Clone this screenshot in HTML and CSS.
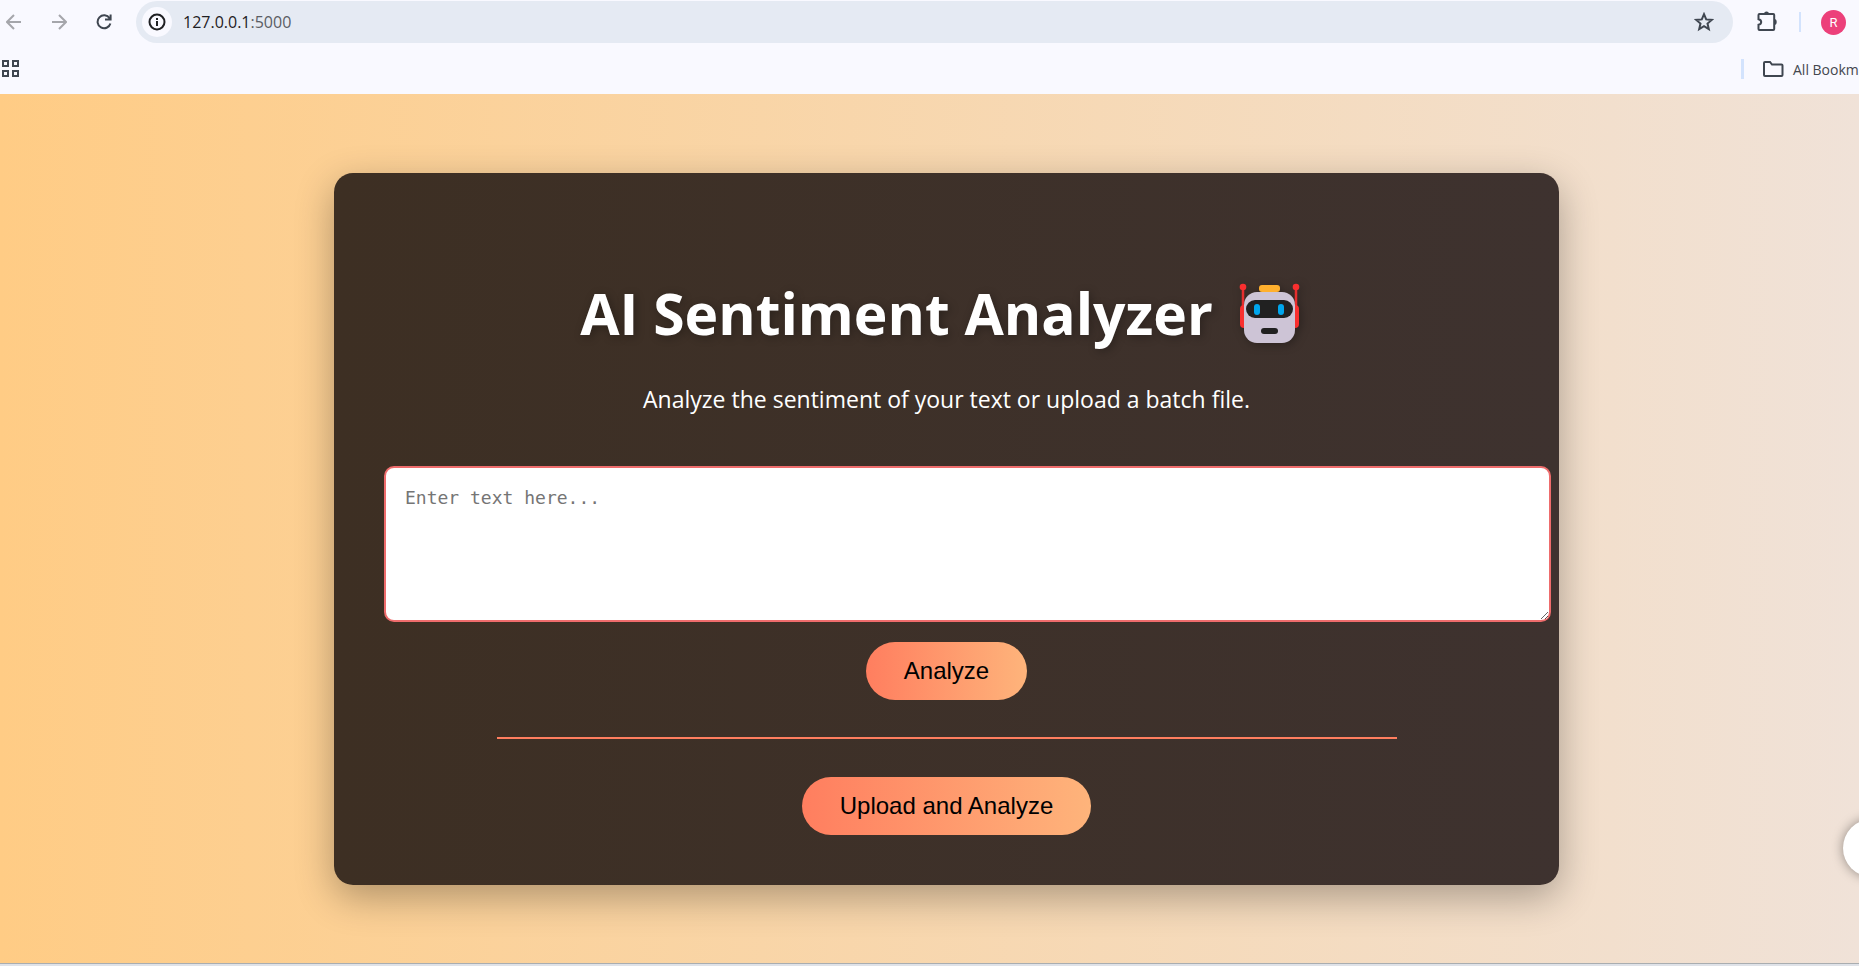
FILE: index.html
```html
<!DOCTYPE html>
<html lang="en">
<head>
<meta charset="utf-8">
<title>AI Sentiment Analyzer</title>
<link rel="stylesheet" href="styles.css">
</head>
<body>
<header class="browser">
  <div class="toolbar">
    <nav class="nav" aria-label="Navigation">
      <button class="icon-btn muted" aria-label="Back"><svg width="16" height="16" viewBox="0 0 16 16"><path d="M15 8H1.500M8 1L1 8l7 7"/></svg></button>
      <button class="icon-btn muted" aria-label="Forward"><svg width="16" height="16" viewBox="0 0 16 16"><path d="M1 8h13.500M8 1l7 7-7 7"/></svg></button>
      <button class="icon-btn" aria-label="Reload"><svg width="16" height="16" viewBox="0 0 16 16"><path d="M13.600 4.300A6.500 6.500 0 1 0 14.400 9.500M14.600 .500V5.500H9"/></svg></button>
    </nav>
    <div class="omnibox">
      <button class="site-info" aria-label="Site information"><svg width="18" height="18" viewBox="0 0 18 18"><circle cx="9" cy="9" r="7.500"/><path d="M9 8v5M9 5v2"/></svg></button>
      <a class="url" href="#">127.0.0.1<span class="port">:5000</span></a>
      <button class="icon-btn star" aria-label="Bookmark"><svg width="20" height="20" viewBox="0 0 20 20"><path d="M10 2.200l2.200 5.200 5.600.500-4.300 3.700 1.300 5.500-4.800-2.900-4.800 2.900 1.300-5.500L2.200 7.900l5.600-.500z"/></svg></button>
    </div>
    <button class="icon-btn" aria-label="Extensions"><svg width="22" height="22" viewBox="0 0 22 22"><path d="M3.500 3h13.700a1 1 0 0 1 1 1v14a1 1 0 0 1-1 1H3.500a1 1 0 0 1-1-1v-4.200c3.600-.8 3.600-4.800 0-5.600V4a1 1 0 0 1 1-1z"/><path class="solid" d="M8 3a2.500 2.500 0 0 1 5 0zM18.200 8a2.500 3 0 0 1 0 6z"/></svg></button>
    <span class="divider"></span>
    <button class="avatar" aria-label="Profile">R</button>
  </div>
  <div class="bookmarks">
    <button class="icon-btn apps" aria-label="Apps"><svg width="20" height="20" viewBox="0 0 20 20"><path d="M3 2h5v5H3zM13 2h5v5h-5zM3 12h5v5H3zM13 12h5v5h-5z"/></svg></button>
    <span class="divider wide"></span>
    <a class="folder" href="#"><svg width="22" height="18" viewBox="0 0 22 18"><path d="M2 3a1 1 0 0 1 1-1h5l2 2.500h9.500a1 1 0 0 1 1 1V15a1 1 0 0 1-1 1H3a1 1 0 0 1-1-1z"/></svg><span>All Bookmarks</span></a>
  </div>
</header>
<main class="page">
  <section class="card">
    <h1 class="title">AI Sentiment Analyzer
      <svg class="robot" width="62" height="62" viewBox="0 0 62 62" role="img" aria-label="robot">
        <path d="M4 5v24M57 5v24" stroke="#e52e2e" stroke-width="2.500"/>
        <circle cx="4" cy="5" r="3.300" fill="#f92f2f"/><circle cx="57" cy="5" r="3.300" fill="#f92f2f"/>
        <rect x="1" y="23" width="8" height="23" rx="4" fill="#f92f2f"/><rect x="52" y="23" width="8" height="23" rx="4" fill="#f92f2f"/>
        <rect x="20" y="3" width="21" height="7" rx="3" fill="#ffb02e"/>
        <rect x="5" y="10" width="51" height="51" rx="13" fill="#cdc4d6"/>
        <rect x="7" y="18" width="47" height="18" rx="9" fill="#212121"/>
        <rect x="15" y="22" width="6" height="11" rx="3" fill="#00a6ed"/><rect x="39" y="22" width="6" height="11" rx="3" fill="#00a6ed"/>
        <rect x="22" y="46" width="17" height="6" rx="3" fill="#212121"/>
      </svg>
    </h1>
    <p class="lead">Analyze the sentiment of your text or upload a batch file.</p>
    <form class="form">
      <textarea class="text-input" aria-label="Text to analyze" placeholder="Enter text here..."></textarea>
      <button class="action" type="button">Analyze</button>
    </form>
    <hr class="rule">
    <button class="action" type="button">Upload and Analyze</button>
  </section>
</main>
<footer class="edge"></footer>
<button class="assistant" aria-label="Assistant"><svg width="28" height="28" viewBox="0 0 28 28"><path d="M0 7h20" stroke="#3cc49a" stroke-width="3"/></svg></button>
</body>
</html>
```
FILE: styles.css
```css
body {
  margin: 0;
  min-height: 100vh;
  display: flex;
  flex-direction: column;
  overflow: hidden;
  font-family: "Open Sans", "Noto Sans", sans-serif;
}

button {
  border: 0;
  padding: 0;
  background: none;
}

.browser {
  background: #f9f9ff;
  color: #44474e;
}

.toolbar {
  display: flex;
  align-items: center;
  height: 44px;
  padding: 0 13px 0 4px;
}

.nav {
  display: flex;
  gap: 25px;
  margin-right: 22px;
}

.icon-btn {
  display: flex;
  padding: 0 2px;
}

.icon-btn svg,
.folder svg,
.site-info svg {
  fill: none;
  stroke: #3f4650;
  stroke-width: 2;
}

.icon-btn.muted svg {
  stroke: #a5a6ab;
}

.icon-btn .solid {
  fill: #3f4650;
  stroke: none;
}

.omnibox {
  display: flex;
  align-items: center;
  flex: 1;
  box-sizing: border-box;
  height: 42px;
  margin-right: 21px;
  padding: 0 17px 0 6px;
  border-radius: 21px;
  background: #e5eaf3;
}

.site-info {
  display: flex;
  align-items: center;
  justify-content: center;
  width: 30px;
  height: 30px;
  margin-right: 11px;
  border-radius: 50%;
  background: #f9f9ff;
}

.site-info svg {
  stroke: #1f2023;
}

.url {
  flex: 1;
  color: #1f2023;
  font-size: 16px;
  text-decoration: none;
}

.port {
  color: #5a5d64;
}

.divider {
  width: 2px;
  height: 20px;
  margin: 0 20px 0 19px;
  background: #d3e3fd;
}

.divider.wide {
  width: 3px;
  margin: 0 18px 0 auto;
}

.avatar {
  width: 25px;
  height: 25px;
  border-radius: 50%;
  background: #ec407a;
  color: #fff;
  font: 13px Roboto, sans-serif;
}

.bookmarks {
  display: flex;
  align-items: center;
  height: 50px;
}

.apps {
  padding: 0;
}

.folder {
  display: flex;
  align-items: center;
  gap: 9px;
  width: 97px;
  color: #44474e;
  font-size: 14px;
  text-decoration: none;
  white-space: nowrap;
}

.folder svg {
  flex: none;
}

.page {
  flex: 1;
  display: flex;
  align-items: center;
  justify-content: center;
  padding-left: 34px;
  background: linear-gradient(90deg, #ffcc85, #f0e2d8);
}

.card {
  display: flex;
  flex-direction: column;
  align-items: center;
  box-sizing: border-box;
  width: 90%;
  max-width: 1225px;
  padding: 100px 50px 50px;
  border-radius: 19px;
  background: linear-gradient(90deg, #3d2f23, #3e322f);
  box-shadow: 0 12px 38px rgba(0, 0, 0, 0.3);
}

.title {
  display: flex;
  align-items: center;
  gap: 26px;
  margin: 0;
  padding-right: 12px;
  color: #fff;
  font-size: 57px;
  line-height: 80px;
  text-shadow: 2px 2px 10px rgba(0, 0, 0, 0.3);
}

.robot {
  filter: drop-shadow(2px 2px 5px rgba(0, 0, 0, 0.3));
}

.lead {
  margin: 29px 0 50px;
  color: #fff;
  font-size: 23px;
  line-height: 34px;
}

.form {
  display: flex;
  flex-direction: column;
  align-items: center;
  gap: 20px;
  width: 100%;
}

.text-input {
  align-self: flex-start;
  width: 100%;
  height: 116px;
  padding: 18px 19px;
  border: 2px solid #ee6c6c;
  border-radius: 10px;
  background: #fff;
  font: 18px/24px "DejaVu Sans Mono", monospace;
}

.text-input::placeholder {
  color: #757575;
}

.action {
  height: 58px;
  padding: 0 38px;
  border-radius: 29px;
  background: linear-gradient(90deg, #ff7e5f, #feb47b);
  color: #000;
  font: 24px "Liberation Sans", Arial, sans-serif;
}

.rule {
  width: 80%;
  height: 2px;
  margin: 37px 0 38px;
  border: 0;
  background: #ff7e5f;
}

.edge {
  height: 2px;
  border-top: 1px solid #a9adb0;
  background: #dfe2e8;
}

.assistant {
  position: fixed;
  right: -42px;
  bottom: 89px;
  width: 58px;
  height: 58px;
  padding-left: 14px;
  border-radius: 29px;
  background: #fff;
  box-shadow: 0 0 12px rgba(0, 0, 0, 0.4);
}
```
